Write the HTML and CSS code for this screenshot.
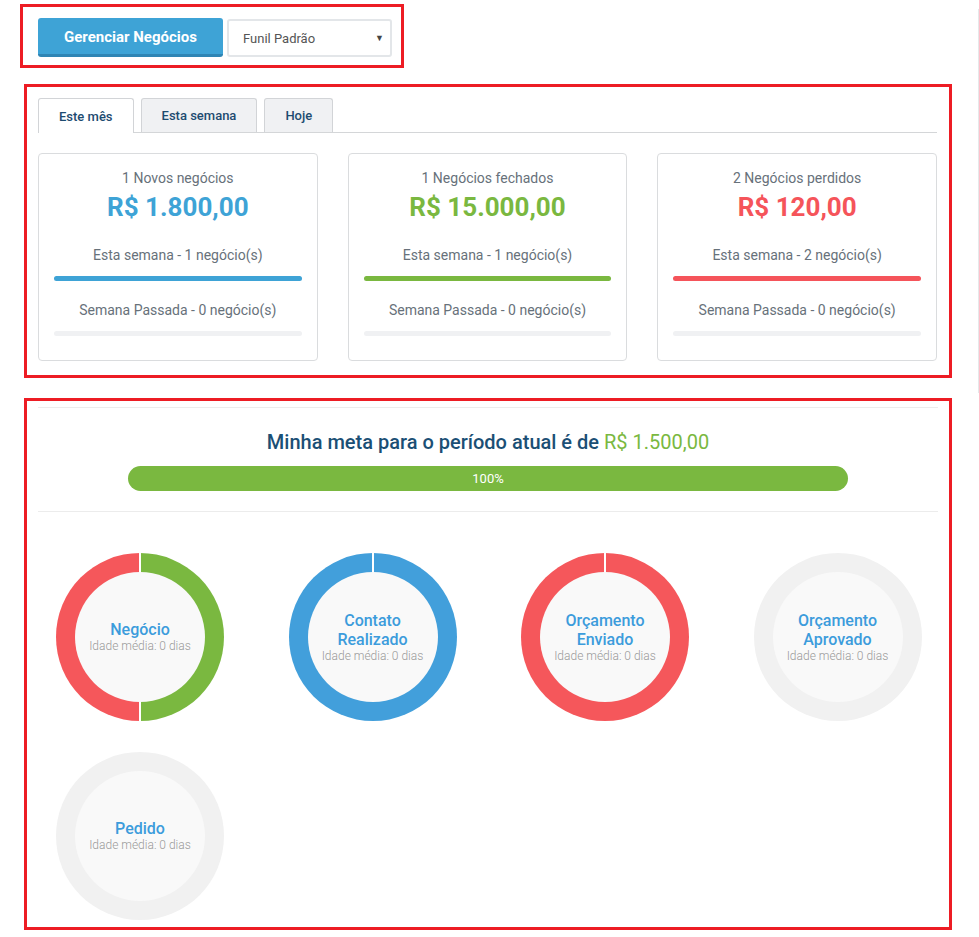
FILE: index.html
```html
<!DOCTYPE html>
<html lang="pt-BR">
<head>
<meta charset="utf-8">
<title>Negócios</title>
<link rel="stylesheet" href="styles.css">
</head>
<body>
<div class="page">
  <div class="main">
    <section class="box box-top">
      <button class="btn-manage">Gerenciar Negócios</button>
      <div class="select">
        <span>Funil Padrão</span>
        <span class="caret">▼</span>
      </div>
    </section>

    <section class="box box-stats">
      <div class="tabs">
        <div class="tab active">Este mês</div>
        <div class="tab">Esta semana</div>
        <div class="tab">Hoje</div>
      </div>
      <div class="cards">
        <div class="card">
          <div class="label">1 Novos negócios</div>
          <div class="value blue">R$ 1.800,00</div>
          <div class="sub">Esta semana - 1 negócio(s)</div>
          <div class="bar"><div class="fill bg-blue"></div></div>
          <div class="sub sub2">Semana Passada - 0 negócio(s)</div>
          <div class="bar"></div>
        </div>
        <div class="card">
          <div class="label">1 Negócios fechados</div>
          <div class="value green">R$ 15.000,00</div>
          <div class="sub">Esta semana - 1 negócio(s)</div>
          <div class="bar"><div class="fill bg-green"></div></div>
          <div class="sub sub2">Semana Passada - 0 negócio(s)</div>
          <div class="bar"></div>
        </div>
        <div class="card">
          <div class="label">2 Negócios perdidos</div>
          <div class="value red">R$ 120,00</div>
          <div class="sub">Esta semana - 2 negócio(s)</div>
          <div class="bar"><div class="fill bg-red"></div></div>
          <div class="sub sub2">Semana Passada - 0 negócio(s)</div>
          <div class="bar"></div>
        </div>
      </div>
    </section>

    <section class="box box-goal">
      <div class="rule"></div>
      <h2 class="goal-title">Minha meta para o período atual é de <span class="goal-value">R$ 1.500,00</span></h2>
      <div class="progress"><span>100%</span></div>
      <div class="rule rule2"></div>
      <div class="donuts">
        <div class="donut d-split">
          <div class="donut-inner">
            <div class="d-title">Negócio</div>
            <div class="d-sub">Idade média: 0 dias</div>
          </div>
        </div>
        <div class="donut d-blue">
          <div class="donut-inner">
            <div class="d-title">Contato<br>Realizado</div>
            <div class="d-sub">Idade média: 0 dias</div>
          </div>
        </div>
        <div class="donut d-red">
          <div class="donut-inner">
            <div class="d-title">Orçamento<br>Enviado</div>
            <div class="d-sub">Idade média: 0 dias</div>
          </div>
        </div>
        <div class="donut d-empty">
          <div class="donut-inner">
            <div class="d-title">Orçamento<br>Aprovado</div>
            <div class="d-sub">Idade média: 0 dias</div>
          </div>
        </div>
        <div class="donut d-empty">
          <div class="donut-inner">
            <div class="d-title">Pedido</div>
            <div class="d-sub">Idade média: 0 dias</div>
          </div>
        </div>
      </div>
    </section>
  </div>
  <div class="edge"></div>
</div>
</body>
</html>
```

FILE: styles.css
```css
* { box-sizing: border-box; }
html, body { margin: 0; padding: 0; background: #fff; }
body { font-family: Roboto, "Liberation Sans", Arial, sans-serif; color: #555; }

.page { display: flex; align-items: flex-start; }
.main { flex: 0 0 978px; padding-top: 4px; }
.edge { width: 1px; height: 384px; margin-top: 9px; background: #e6e8ea; }

.box { border: 3px solid #ed1c24; }

/* top bar */
.box-top {
  margin-left: 20px;
  width: 384px;
  height: 64px;
  padding: 11px 0 0 15px;
  display: flex;
  align-items: flex-start;
}
.btn-manage {
  width: 185px;
  height: 39px;
  border: 0;
  border-bottom: 3px solid #2f85b4;
  border-radius: 3px;
  background: #3ea3d6;
  color: #fff;
  font-family: Roboto, "Liberation Sans", Arial, sans-serif;
  font-weight: 700;
  font-size: 15px;
  padding: 2px 0 0;
}
.select {
  margin-left: 4px;
  margin-top: 1px;
  width: 165px;
  height: 38px;
  border: 2px solid #e3e6e9;
  border-radius: 3px;
  display: flex;
  align-items: center;
  justify-content: space-between;
  padding: 0 6px 0 14px;
  font-size: 13px;
  color: #555;
}
.caret { font-size: 9px; color: #444; }

/* stats */
.box-stats {
  margin-left: 24px;
  margin-top: 16px;
  width: 928px;
  height: 294px;
  padding: 11px 12px 14px 11px;
}
.tabs {
  display: flex;
  gap: 7px;
  border-bottom: 1px solid #d4d6d8;
  height: 35px;
}
.tab {
  height: 34px;
  padding: 0 20px;
  display: flex;
  align-items: center;
  font-size: 13px;
  font-weight: 500;
  color: #1d4b70;
  background: #f0f1f3;
  border: 1px solid #d2d4d7;
  border-bottom: 0;
  border-radius: 3px 3px 0 0;
}
.tab.active {
  background: #fff;
  height: 35px;
}
.cards {
  display: grid;
  grid-template-columns: repeat(3, 1fr);
  column-gap: 30px;
  margin-top: 20px;
}
.card {
  height: 208px;
  border: 1px solid #dadcde;
  border-radius: 4px;
  padding: 14px 15px 0 15px;
  text-align: center;
}
.label { font-size: 14px; line-height: 20px; color: #67717a; }
.value { font-size: 26px; line-height: 32px; font-weight: 700; margin-top: 3px; }
.blue { color: #3ea3d6; }
.green { color: #7ab840; }
.red { color: #f5545a; }
.sub { font-size: 14px; line-height: 20px; color: #67717a; margin-top: 22px; }
.sub2 { margin-top: 19px; }
.bar { height: 5px; border-radius: 3px; background: #f0f1f3; margin-top: 11px; }
.fill { height: 100%; width: 100%; border-radius: 3px; }
.bg-blue { background: #3ea3d6; }
.bg-green { background: #7ab840; }
.bg-red { background: #f5545a; }

/* goal */
.box-goal {
  margin-left: 24px;
  margin-top: 20px;
  width: 928px;
  height: 532px;
  padding: 6px 11px 0 11px;
}
.rule { height: 1px; background: #ececec; }
.goal-title {
  margin: 20px 0 0;
  text-align: center;
  font-size: 20px;
  line-height: 28px;
  font-weight: 500;
  color: #1b4f75;
}
.goal-value { color: #7ab840; font-weight: 400; }
.progress {
  width: 720px;
  height: 25px;
  margin: 10px auto 0;
  border-radius: 13px;
  background: #7ab840;
  color: #fff;
  font-size: 13px;
  display: flex;
  align-items: center;
  justify-content: center;
}
.rule2 { margin-top: 20px; }

.donuts {
  display: grid;
  grid-template-columns: repeat(4, 168px);
  column-gap: 64.5px;
  row-gap: 31px;
  margin-top: 41px;
  padding-left: 18px;
}
.donut {
  position: relative;
  width: 168px;
  height: 168px;
  border-radius: 50%;
  padding: 19px;
}
.donut::before {
  content: "";
  position: absolute;
  left: 83px;
  top: 0;
  width: 2px;
  height: 50%;
  background: #fff;
}
.d-split { background: linear-gradient(to right, #f5575b 50%, #7ab840 50%); }
.d-split::before { height: 100%; }
.d-blue { background: #429fdb; }
.d-red { background: #f5575b; }
.d-empty { background: #f1f1f1; }
.d-empty::before { display: none; }
.donut-inner {
  position: relative;
  width: 130px;
  height: 130px;
  border-radius: 50%;
  background: #f9f9f9;
  display: flex;
  flex-direction: column;
  align-items: center;
  justify-content: center;
  text-align: center;
}
.d-title { font-size: 16px; line-height: 19px; font-weight: 500; color: #3c9cdc; }
.d-sub { font-size: 12px; line-height: 15px; font-weight: 300; color: #9a9a9a; }
```
